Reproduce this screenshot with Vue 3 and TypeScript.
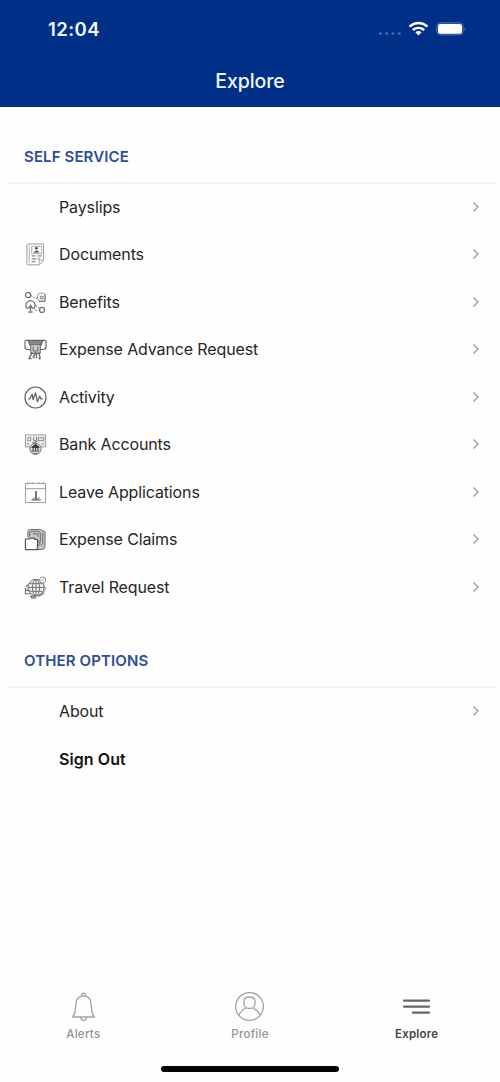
<script setup lang="ts">
interface Item {
  label: string
  icon?: string
  arrow: boolean
  strong?: boolean
}
interface Section {
  title: string
  items: Item[]
}

const sections: Section[] = [
  {
    title: 'SELF SERVICE',
    items: [
      { label: 'Payslips', arrow: true },
      { label: 'Documents', icon: 'documents', arrow: true },
      { label: 'Benefits', icon: 'benefits', arrow: true },
      { label: 'Expense Advance Request', icon: 'advance', arrow: true },
      { label: 'Activity', icon: 'activity', arrow: true },
      { label: 'Bank Accounts', icon: 'bank', arrow: true },
      { label: 'Leave Applications', icon: 'leave', arrow: true },
      { label: 'Expense Claims', icon: 'claims', arrow: true },
      { label: 'Travel Request', icon: 'travel', arrow: true },
    ],
  },
  {
    title: 'OTHER OPTIONS',
    items: [
      { label: 'About', arrow: true },
      { label: 'Sign Out', arrow: false, strong: true },
    ],
  },
]
</script>

<template>
  <div class="screen">
    <header class="header">
      <div class="status">
        <span class="time">12:04</span>
        <svg class="indicators" width="90" height="20" viewBox="0 0 90 20">
          <g fill="#4461aa">
            <circle cx="2.5" cy="14.500" r="1.6" /><circle cx="8.7" cy="14.500" r="1.6" />
            <circle cx="15" cy="14.500" r="1.6" /><circle cx="21.2" cy="14.500" r="1.6" />
          </g>
          <g fill="none" stroke="#fff" stroke-width="2.5">
            <path d="M31.500 7.600C37 2.800 44 2.800 49.500 7.600" />
            <path d="M34.800 11C38.200 8.200 42.800 8.200 46.200 11" />
          </g>
          <path d="M37.400 13.200Q40.500 10.900 43.600 13.200L40.500 16.500Z" fill="#fff" />
          <rect x="58.700" y="3.700" width="26.500" height="12.300" rx="3.700" fill="#204a9a" stroke="#4765ad" />
          <rect x="60" y="5" width="24" height="9.800" rx="2.300" fill="#fff" />
          <path d="M86.500 8Q88.500 10 86.500 12Z" fill="#5c78bb" />
        </svg>
      </div>
      <h1 class="title">Explore</h1>
    </header>

    <main class="content">
      <section v-for="s in sections" :key="s.title" class="section">
        <h2 class="heading">{{ s.title }}</h2>
        <ul class="list">
          <li v-for="it in s.items" :key="it.label" class="row">
            <span class="icon">
              <svg v-if="it.icon" width="23" height="23" viewBox="0 0 24 24" fill="none" stroke="#707070" stroke-width="1" stroke-linejoin="round">
                <g v-if="it.icon === 'documents'">
                  <path d="M4.500 1H20.500V18L16 22.800H4.500Q3 22.800 3 21V2.500Q3 1 4.500 1Z" stroke="#999" />
                  <path d="M5.500 3V20.500M8 3.500H18.500V11H8ZM16 22.500V18H20.500" stroke="#aaa" />
                  <circle cx="13" cy="5.500" r="1.400" fill="#444" stroke="none" />
                  <path d="M10 9.800Q13 6 16 9.800Z" fill="#444" stroke="none" />
                  <path d="M8 13.500H12M14 13.500H18.500M8 16.500H12.500M14 16.500H17M8 19.500H12" stroke="#888" stroke-width="1.400" />
                </g>
                <g v-else-if="it.icon === 'benefits'">
                  <circle cx="4.200" cy="4.200" r="2.700" stroke-width="1.300" />
                  <path d="M7 4.500L10 6.500L13.500 8" stroke-dasharray="2 1" />
                  <circle cx="18.300" cy="6.300" r="4.200" stroke="#888" />
                  <path d="M15.500 11H22V3M17 8V5.500H20V8Z" stroke="#777" />
                  <path d="M3.500 18.500A4.800 4.800 0 1 1 10 18.500" stroke-width="1.300" />
                  <path d="M6.800 22.500V14M4.200 18.500L6.800 15.200L9.400 18.500M4.500 22H9" stroke-width="1.300" />
                  <circle cx="18.800" cy="19.800" r="2.600" stroke-width="1.300" />
                  <path d="M12 15L15.700 17.800M11.500 20H15" stroke-dasharray="2 1" />
                </g>
                <g v-else-if="it.icon === 'advance'" stroke="#666">
                  <path d="M4.500 2.500H19.500L18 7.500H6Z" fill="#888" stroke-width="1.200" />
                  <path d="M5 2.500H2.500Q1 2.500 1 4.500V9.500Q1 12 4 12H7M19 2.500H21.500Q23 2.500 23 4.500V9.500Q23 12 20 12H17" stroke-width="1.200" />
                  <path d="M7 7.500V16H17V7.500M9.500 9V13.500H14.500V9" fill="#ccc" />
                  <path d="M8.500 15L5.500 21M12 15L9.500 20.500M15.500 15L17 22M13 15V21M4.500 21.500H8M9 20.500H11M15 21.500H17.500" stroke-width="1.400" />
                </g>
                <g v-else-if="it.icon === 'activity'" stroke="#5c5c5c">
                  <circle cx="12" cy="12" r="11" stroke-width="1.200" />
                  <path d="M4.500 13.500H6L8.500 8.500L9.500 14.500L12 7L14 16.500L16.500 10.500L17.500 13.500H19.500" stroke-width="1.200" />
                </g>
                <g v-else-if="it.icon === 'bank'">
                  <path d="M1.500 2H22.500V14.500H17.500M6.500 14.500H1.500V2" fill="#eee" stroke="#999" />
                  <path d="M4 5H7V8H4ZM10 4V8H13V4M15 5H20.500V8H15ZM3 11.500H6M18 11.500H21M8 10.500L14 9" stroke="#888" stroke-width="1.100" />
                  <circle cx="12" cy="16.500" r="5.900" fill="#ddd" />
                  <path d="M8 15L12 11.700L16 15Z" fill="#333" stroke="#333" />
                  <path d="M9.500 15.500V18M12 15.500V18M14.500 15.500V18M8 18.800H16" stroke="#444" stroke-width="1.100" />
                  <path d="M9.500 21.300H14.500" />
                </g>
                <g v-else-if="it.icon === 'leave'" stroke="#999">
                  <path d="M1.500 2.500H22.500V22.500H1.500ZM1.500 8H22.500" />
                  <path d="M4 1V4M9 1V3.500M15 1V3.500M20 1V4" stroke="#aaa" />
                  <path d="M12.500 10.500V19.500" stroke="#444" stroke-width="1.500" />
                  <path d="M8 19.700H17.500" stroke="#555" stroke-width="1.200" />
                  <path d="M9 19.500L12 16.500M16.500 17L12.500 19.500" stroke="#777" />
                </g>
                <g v-else-if="it.icon === 'claims'" stroke="#666">
                  <path d="M4 10V4Q4 1.500 7 1.500H17L22 4V19Q22 22.500 18 22.500H13" fill="#c6c6c6" />
                  <path d="M6 9V5Q6 3.500 8 3.500H15Q17 3.500 17 6V15M9 6H14.500V9M19.500 5V16M17 19L20 16" />
                  <path d="M1.500 11.500H6L7 10.500H11V12H14V22.500H1.500Z" fill="#fff" stroke="#555" stroke-width="1.200" />
                  <path d="M14 12L16.500 16L14.500 19" stroke="#555" />
                </g>
                <g v-else-if="it.icon === 'travel'">
                  <circle cx="12.500" cy="12" r="8.500" fill="#eee" />
                  <ellipse cx="12.500" cy="12" rx="3.800" ry="8.500" />
                  <path d="M4 12H21M5.500 8H19M5.500 16H19.500M12.500 4V20" />
                  <circle cx="19.500" cy="4.200" r="3.200" fill="#fff" stroke="#888" />
                  <path d="M18 5L21 2.800M19.500 7.500L22.500 13L20 18" stroke="#888" />
                  <path d="M1.500 12.500V18.500H7M2 15H6M2 11L4.500 9M7 21H12V22.800H8ZM15 21.500L20.500 18" stroke-width="1.200" />
                </g>
              </svg>
            </span>
            <span class="label" :class="{ strong: it.strong }">{{ it.label }}</span>
            <svg v-if="it.arrow" class="chevron" width="8" height="12" viewBox="0 0 8 12" fill="none">
              <path d="M1.500 1.500L6 6L1.500 10.500" stroke="#999" stroke-width="1.300" />
            </svg>
          </li>
        </ul>
      </section>
    </main>

    <nav class="tabs">
      <div class="tab">
        <svg width="30" height="30" viewBox="0 0 30 30" fill="none" stroke="#a2a2a2" stroke-width="1.300" stroke-linejoin="round">
          <path d="M13.500 3.500Q13.500 1.200 15.500 1.200Q17.500 1.200 17.500 3.500M4.500 25H26.500Q24.500 22.500 24 20L22.800 10Q21.500 4 15.500 4Q9.500 4 8.200 10L7 20Q6.500 22.500 4.500 25ZM12.500 25.500Q13 28.400 15.500 28.400Q18 28.400 18.500 25.500" />
        </svg>
        <span class="tab-label">Alerts</span>
      </div>
      <div class="tab">
        <svg width="30" height="30" viewBox="0 0 30 30" fill="none" stroke="#a2a2a2" stroke-width="1.300">
          <circle cx="14.500" cy="14.500" r="13.900" />
          <path d="M9 9.500Q9 5 14.500 5Q20 5 20 9.500V12Q19.500 16.500 14.500 16.500Q9.500 16.500 9 12ZM4 23Q5.500 19 11 16M18 16Q23.500 19 25 23" />
        </svg>
        <span class="tab-label">Profile</span>
      </div>
      <div class="tab active">
        <svg width="30" height="30" viewBox="0 0 30 30" stroke="#666" stroke-width="2.200" stroke-linecap="round">
          <path d="M2 8.700H27M2 14.700H27M11 20.700H27" />
        </svg>
        <span class="tab-label">Explore</span>
      </div>
    </nav>
    <div class="home"></div>
  </div>
</template>

<style>
body {
  margin: 0;
  background: #fff;
}
</style>

<style scoped>
.screen {
  width: 500px;
  height: 1082px;
  display: flex;
  flex-direction: column;
  overflow: hidden;
  background: #fefefe;
  font-family: Inter, "Liberation Sans", sans-serif;
  color: #262626;
}
.header {
  height: 106.5px;
  flex: none;
  background: #002f87;
  color: #f2f8ff;
}
.status {
  height: 58px;
  padding: 0 32px 0 48px;
  display: flex;
  align-items: center;
  justify-content: space-between;
}
.time {
  font-size: 18.5px;
  font-weight: 600;
  letter-spacing: 0.45px;
}
.title {
  margin: 0;
  font-size: 19.5px;
  font-weight: 500;
  line-height: 46px;
  letter-spacing: -0.1px;
  text-align: center;
}
.content {
  flex: 1;
  padding-top: 25px;
}
.heading {
  margin: 0 5px 0 8px;
  padding-left: 16px;
  height: 50px;
  line-height: 49px;
  border-bottom: 2px solid #f0f1f2;
  font-size: 15px;
  font-weight: 600;
  letter-spacing: 0.12px;
  color: #2c4e96;
}
.list {
  list-style: none;
  margin: -0.1px 0 25.4px;
  padding: 0;
}
.row {
  height: 47.5px;
  display: flex;
  align-items: center;
  padding: 0 20px 0 24px;
  box-sizing: border-box;
}
.icon {
  width: 24px;
  height: 24px;
  margin-right: 11px;
}
.icon svg {
  display: block;
  margin-top: 0.5px;
}
.chevron {
  margin-bottom: 1px;
}
.label {
  flex: 1;
  font-size: 16px;
  line-height: 20px;
  padding-bottom: 1px;
  letter-spacing: -0.13px;
}
.strong {
  font-weight: 600;
  letter-spacing: 0.08px;
  color: #111;
}
.tabs {
  display: flex;
  flex: none;
  height: 74.5px;
}
.tab {
  flex: 1;
  display: flex;
  flex-direction: column;
  align-items: center;
  color: #929292;
}
.tab-label {
  margin-top: 5px;
  font-size: 11.5px;
  line-height: 14px;
  font-weight: 500;
  letter-spacing: 0.3px;
}
.active {
  color: #444;
}
.active .tab-label {
  font-weight: 600;
  letter-spacing: 0.2px;
}
.home {
  flex: none;
  width: 178px;
  height: 6px;
  margin: 0 auto 10px;
  border-radius: 3px;
  background: #000;
}
</style>
